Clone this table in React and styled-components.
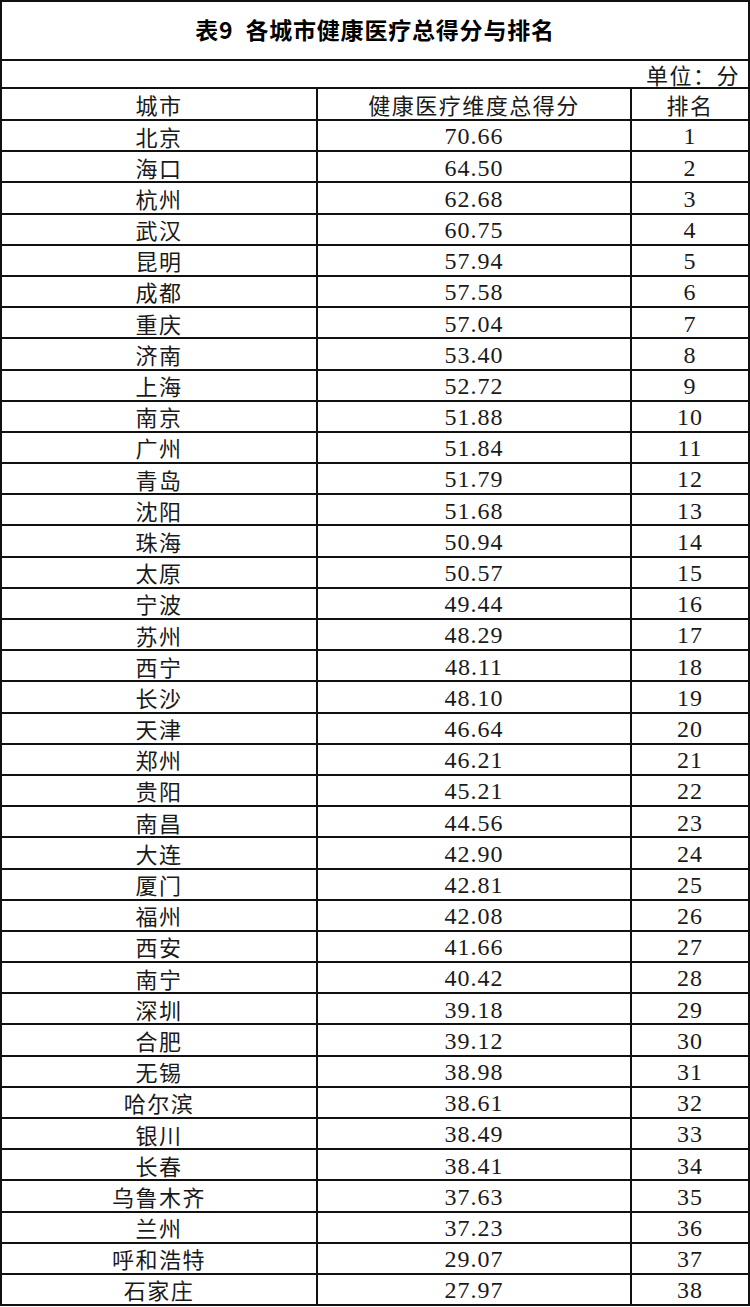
import React from "react";
import styled, { createGlobalStyle } from "styled-components";

// Page reset so the table sits right at the top-left corner
const GlobalStyle = createGlobalStyle`
  html, body {
    margin: 0;
    padding: 0;
    background: #fff;
  }
  body {
    font-family: "Noto Sans CJK SC", "Liberation Serif", serif;
    color: #111;
  }
`;

const rows = [
  ["北京", "70.66"],
  ["海口", "64.50"],
  ["杭州", "62.68"],
  ["武汉", "60.75"],
  ["昆明", "57.94"],
  ["成都", "57.58"],
  ["重庆", "57.04"],
  ["济南", "53.40"],
  ["上海", "52.72"],
  ["南京", "51.88"],
  ["广州", "51.84"],
  ["青岛", "51.79"],
  ["沈阳", "51.68"],
  ["珠海", "50.94"],
  ["太原", "50.57"],
  ["宁波", "49.44"],
  ["苏州", "48.29"],
  ["西宁", "48.11"],
  ["长沙", "48.10"],
  ["天津", "46.64"],
  ["郑州", "46.21"],
  ["贵阳", "45.21"],
  ["南昌", "44.56"],
  ["大连", "42.90"],
  ["厦门", "42.81"],
  ["福州", "42.08"],
  ["西安", "41.66"],
  ["南宁", "40.42"],
  ["深圳", "39.18"],
  ["合肥", "39.12"],
  ["无锡", "38.98"],
  ["哈尔滨", "38.61"],
  ["银川", "38.49"],
  ["长春", "38.41"],
  ["乌鲁木齐", "37.63"],
  ["兰州", "37.23"],
  ["呼和浩特", "29.07"],
  ["石家庄", "27.97"],
];

const Sheet = styled.div`
  display: grid;
  grid-template-columns: 316px 314px 1fr;
  grid-template-rows: 59px 28px 32px repeat(${rows.length}, 31.2px);
  width: 750px;
  box-sizing: border-box;
  border-top: 2px solid #111;
  border-left: 2px solid #111;
`;

const Cell = styled.div`
  box-sizing: border-box;
  display: flex;
  align-items: center;
  justify-content: ${(p) => (p.$align === "right" ? "flex-end" : "center")};
  padding: ${(p) => (p.$align === "right" ? "0 8px 0 0" : "0")};
  grid-column: ${(p) => (p.$span ? "1 / -1" : "auto")};
  border-right: 2px solid #111;
  border-bottom: 2px solid #111;
  font-size: 22px;
  letter-spacing: 1.5px;
  line-height: 1.1;
  font-weight: 400;
  color: #1a1a1a;
  white-space: nowrap;
`;

const TitleCell = styled(Cell)`
  font-size: 23px;
  font-weight: 700;
  letter-spacing: 0.8px;
  color: #000;
  padding-bottom: 1px;
`;

const Num = styled.span`
  font-family: "Liberation Serif", "DejaVu Serif", serif;
  font-size: 24px;
  letter-spacing: 1px;
  padding-top: 2px;
  color: #1a1a1a;
`;

const App = () => {
  return (
    <>
      <GlobalStyle />
      <Sheet>
        <TitleCell $span>表9&nbsp;&nbsp;各城市健康医疗总得分与排名</TitleCell>
        <Cell $span $align="right">单位：分</Cell>
        <Cell>城市</Cell>
        <Cell>健康医疗维度总得分</Cell>
        <Cell>排名</Cell>
        {rows.map(([city, score], i) => (
          <React.Fragment key={city}>
            <Cell>{city}</Cell>
            <Cell>
              <Num>{score}</Num>
            </Cell>
            <Cell>
              <Num>{i + 1}</Num>
            </Cell>
          </React.Fragment>
        ))}
      </Sheet>
    </>
  );
};

export default App;
